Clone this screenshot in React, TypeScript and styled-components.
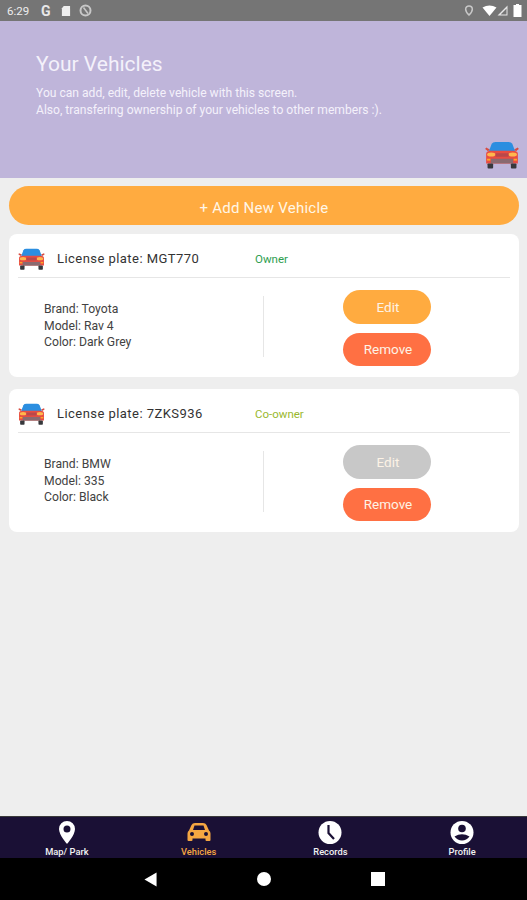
import React from "react";
import styled, { createGlobalStyle } from "styled-components";

const GlobalStyle = createGlobalStyle`
  html, body { margin: 0; padding: 0; background: #eeeeee; }
  * { box-sizing: border-box; }
  body { font-family: Roboto, "Liberation Sans", sans-serif; }
`;

const Screen = styled.div`
  width: 527px;
  height: 900px;
  display: flex;
  flex-direction: column;
  background: #eeeeee;
  overflow: hidden;
`;

const StatusBar = styled.div`
  height: 21px;
  background: #757575;
  color: #eeeeee;
  display: flex;
  align-items: center;
  justify-content: space-between;
  padding: 0 5px 0 7px;
  flex-shrink: 0;
`;
const StatusGroup = styled.div`
  display: flex;
  align-items: center;
  gap: 8px;
`;
const StatusRight = styled.div`
  display: flex;
  align-items: center;
  gap: 0;
`;
const StatusTime = styled.span`
  font-size: 11.5px;
  width: 24px;
  margin-right: 2px;
`;
const StatusLetter = styled.span`
  font-size: 14px;
  font-weight: 700;
  width: 12px;
  color: #e8e8e8;
`;

const Header = styled.div`
  height: 157px;
  background: #bfb5da;
  padding: 31px 36px 0;
  color: #f4f1fa;
  display: flex;
  flex-direction: column;
  flex-shrink: 0;
`;
const Title = styled.div`
  font-size: 21px;
  line-height: 24px;
  margin-bottom: 9px;
`;
const Description = styled.div`
  font-size: 12.1px;
  line-height: 17px;
`;
const HeaderCar = styled.div`
  align-self: flex-end;
  margin: 22px -29px 0 0;
  height: 30px;
`;

const Content = styled.div`
  flex: 1;
  padding: 8px 8px 0 9px;
  display: flex;
  flex-direction: column;
`;

const AddButton = styled.div`
  height: 39px;
  border-radius: 20px;
  background: #ffab40;
  color: #fff6e6;
  font-size: 15px;
  display: flex;
  align-items: center;
  justify-content: center;
  padding-top: 4px;
  margin-bottom: 9px;
  letter-spacing: 0.25px;
`;

const Card = styled.div`
  height: 143px;
  background: #ffffff;
  border-radius: 8px;
  padding: 0 9px;
  margin-bottom: 12px;
  display: flex;
  flex-direction: column;
`;
const CardHead = styled.div`
  height: 44px;
  padding-top: 6px;
  display: flex;
  align-items: center;
  border-bottom: 1px solid #e6e6e6;
`;
const Plate = styled.div`
  font-size: 13px;
  color: #333333;
  width: 198px;
  margin-left: 12px;
  letter-spacing: 0.45px;
`;
const Role = styled.div<{ $color: string }>`
  font-size: 11.5px;
  color: ${(props) => props.$color};
`;
const CardBody = styled.div`
  flex: 1;
  display: flex;
  align-items: flex-start;
`;
const Specs = styled.div`
  width: 246px;
  height: 61px;
  margin-top: 18px;
  padding: 5px 0 0 26px;
  border-right: 1px solid #e6e6e6;
  font-size: 12.2px;
  line-height: 16.5px;
  color: #424242;
`;
const Actions = styled.div`
  flex: 1;
  display: flex;
  flex-direction: column;
  align-items: center;
  gap: 9px;
  padding-top: 12px;
`;
const ActionButton = styled.div<{ $bg: string }>`
  width: 88px;
  height: 33.5px;
  border-radius: 17px;
  background: ${(props) => props.$bg};
  color: #fdf3e6;
  font-size: 13.5px;
  padding-left: 2px;
  display: flex;
  align-items: center;
  justify-content: center;
`;

const TabBar = styled.div`
  height: 42px;
  background: #1a1035;
  border-top: 1px solid #3a3a3a;
  padding-left: 1px;
  display: flex;
  flex-shrink: 0;
`;
const Tab = styled.div<{ $color: string }>`
  flex: 0 0 131.75px;
  display: flex;
  flex-direction: column;
  align-items: center;
  padding-top: 3px;
  color: ${(props) => props.$color};
  font-size: 9.3px;
  font-weight: 500;
  line-height: 11px;
`;
const TabIcon = styled.div`
  height: 25px;
  margin-bottom: 1px;
`;

const NavBar = styled.div`
  height: 42px;
  background: #000000;
  display: flex;
  align-items: center;
  flex-shrink: 0;
  padding-left: 144px;
  gap: 100px;
`;

function CarColor({ width, height }: { width: number; height: number }) {
  return (
    <svg width={width} height={height} viewBox="0 0 36 30">
      <path d="M3 11 L0 8.5 L1 7 L5 9Z M33 11 L36 8.5 L35 7 L31 9Z" fill="#d84b40" />
      <path d="M3.5 12 L7 3 Q8 1 11 1 H25 Q28 1 29 3 L32.5 12Z" fill="#2b8ee0" />
      <path d="M1 14 Q1 11 5 10.5 H31 Q35 11 35 14 V24 H1Z" fill="#e84c42" />
      <ellipse cx="6.5" cy="14.5" rx="4.5" ry="2.2" fill="#ffb74d" />
      <ellipse cx="29.5" cy="14.5" rx="4.5" ry="2.2" fill="#ffb74d" />
      <rect x="11" y="13" width="14" height="4" rx="1" fill="#b9484a" />
      <rect x="6" y="19" width="24" height="5" fill="#8a6a70" />
      <rect x="2" y="19" width="3.5" height="2" fill="#ffa726" />
      <rect x="30.5" y="19" width="3.5" height="2" fill="#ffa726" />
      <rect x="2.5" y="24" width="6" height="5.5" rx="1" fill="#37383c" />
      <rect x="27.5" y="24" width="6" height="5.5" rx="1" fill="#37383c" />
    </svg>
  );
}

function VehicleCard(props: {
  plate: string;
  role: string;
  roleColor: string;
  brand: string;
  model: string;
  color: string;
  editColor: string;
}) {
  return (
    <Card>
      <CardHead>
        <CarColor width={27} height={22} />
        <Plate>License plate: {props.plate}</Plate>
        <Role $color={props.roleColor}>{props.role}</Role>
      </CardHead>
      <CardBody>
        <Specs>
          <div>Brand: {props.brand}</div>
          <div>Model: {props.model}</div>
          <div>Color: {props.color}</div>
        </Specs>
        <Actions>
          <ActionButton $bg={props.editColor}>Edit</ActionButton>
          <ActionButton $bg="#ff7043">Remove</ActionButton>
        </Actions>
      </CardBody>
    </Card>
  );
}

export default function App() {
  return (
    <Screen>
      <GlobalStyle />
      <StatusBar>
        <StatusGroup>
          <StatusTime>6:29</StatusTime>
          <StatusLetter>G</StatusLetter>
          <svg width="10" height="12" viewBox="0 0 11 12">
            <path d="M3 0.5 H10 V11.5 H1 V3Z" fill="#eeeeee" />
          </svg>
          <svg width="13" height="13" viewBox="0 0 13 13">
            <circle cx="6.5" cy="6.5" r="5" fill="none" stroke="#c8c8c8" strokeWidth="2" />
            <path d="M4.5 3.5 L9 9.5" stroke="#c8c8c8" strokeWidth="1.6" />
          </svg>
        </StatusGroup>
        <StatusRight>
          <svg width="10" height="13" viewBox="0 0 12 13" style={{ marginRight: 8 }}>
            <path d="M6 1 A4 4 0 0 1 10 5 C10 8 6 12 6 12 C6 12 2 8 2 5 A4 4 0 0 1 6 1Z" fill="none" stroke="#c8c8c8" strokeWidth="1.8" />
          </svg>
          <svg width="15" height="11" viewBox="0 0 14 11">
            <path d="M0 2.5 Q7 -1.5 14 2.5 L7 11Z" fill="#ffffff" />
          </svg>
          <svg width="11" height="11" viewBox="0 0 11 11">
            <path d="M0.5 10.5 L10.5 0.5 V10.5Z M3.5 9.5 H9.5 V3.5Z" fill="#e8e8e8" fillRule="evenodd" />
          </svg>
          <svg width="9" height="13" viewBox="0 0 9 13" style={{ marginLeft: 5 }}>
            <path d="M3 0 H6 V1 H8.5 V13 H0.5 V1 H3Z" fill="#ffffff" />
          </svg>
        </StatusRight>
      </StatusBar>

      <Header>
        <Title>Your Vehicles</Title>
        <Description>
          You can add, edit, delete vehicle with this screen.
          <br />
          Also, transfering ownership of your vehicles to other members :).
        </Description>
        <HeaderCar>
          <CarColor width={36} height={28} />
        </HeaderCar>
      </Header>

      <Content>
        <AddButton>+ Add New Vehicle</AddButton>
        <VehicleCard
          plate="MGT770"
          role="Owner"
          roleColor="#2e9e4f"
          brand="Toyota"
          model="Rav 4"
          color="Dark Grey"
          editColor="#ffab40"
        />
        <VehicleCard
          plate="7ZKS936"
          role="Co-owner"
          roleColor="#9ab82e"
          brand="BMW"
          model="335"
          color="Black"
          editColor="#c8c8c8"
        />
      </Content>

      <TabBar>
        <Tab $color="#f2f2f2">
          <TabIcon>
            <svg width="18" height="25" viewBox="0 0 18 25">
              <path fillRule="evenodd" d="M9 1 A8 8 0 0 1 17 9 C17 15 9 24 9 24 C9 24 1 15 1 9 A8 8 0 0 1 9 1Z M9 5.5 A3.5 3.5 0 1 0 9 12.5 A3.5 3.5 0 1 0 9 5.5Z" fill="#ffffff" />
            </svg>
          </TabIcon>
          Map/ Park
        </Tab>
        <Tab $color="#f5a742">
          <TabIcon>
            <svg width="24" height="25" viewBox="0 0 24 25">
              <path fillRule="evenodd" d="M4.5 5 Q5.5 3 8 3 H16 Q18.5 3 19.5 5 L22 10.5 Q23.5 11.5 23.5 13.5 V20 Q23.5 21 22.5 21 H19.5 Q18.5 21 18.5 20 V18.5 H5.5 V20 Q5.5 21 4.5 21 H1.5 Q0.5 21 0.5 20 V13.5 Q0.5 11.5 2 10.5Z M7.5 5.5 L6 10 H18 L16.5 5.5Z M5 12 A2 2 0 1 0 5 16 A2 2 0 1 0 5 12Z M19 12 A2 2 0 1 0 19 16 A2 2 0 1 0 19 12Z" fill="#f5a742" />
            </svg>
          </TabIcon>
          Vehicles
        </Tab>
        <Tab $color="#f2f2f2">
          <TabIcon>
            <svg width="24" height="25" viewBox="0 0 24 25">
              <circle cx="12" cy="12.5" r="11.5" fill="#ffffff" />
              <path d="M10.5 5 V13 L16 19" fill="none" stroke="#1a1035" strokeWidth="2.2" />
            </svg>
          </TabIcon>
          Records
        </Tab>
        <Tab $color="#f2f2f2">
          <TabIcon>
            <svg width="24" height="25" viewBox="0 0 24 25">
              <circle cx="12" cy="12.5" r="11.5" fill="#ffffff" />
              <circle cx="12" cy="8.5" r="3.8" fill="#1a1035" />
              <path d="M4.5 16.5 Q12 12 19.5 16.5 Q16.5 20.5 12 20.5 Q7.5 20.5 4.5 16.5Z" fill="#1a1035" />
            </svg>
          </TabIcon>
          Profile
        </Tab>
      </TabBar>

      <NavBar>
        <svg width="13" height="15" viewBox="0 0 14 16">
          <path d="M0.5 8 L13.5 0.5 V15.5Z" fill="#ffffff" />
        </svg>
        <svg width="14" height="14" viewBox="0 0 14 14">
          <circle cx="7" cy="7" r="7" fill="#ffffff" />
        </svg>
        <svg width="14" height="14" viewBox="0 0 14 14">
          <rect width="14" height="14" fill="#ffffff" />
        </svg>
      </NavBar>
    </Screen>
  );
}
